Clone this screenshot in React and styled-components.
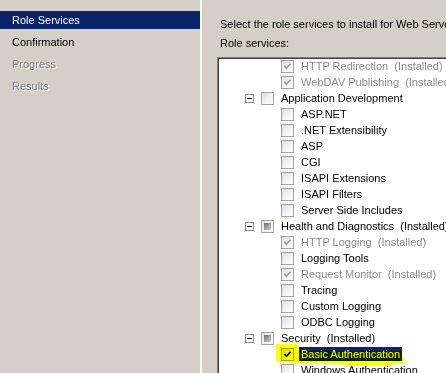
import React from "react";
import styled, { createGlobalStyle, css } from "styled-components";

const Global = createGlobalStyle`
  html, body {
    margin: 0;
    padding: 0;
    background: #d4d0c8;
    overflow: hidden;
  }
  body {
    font-family: "Liberation Sans", Arial, sans-serif;
    font-size: 11px;
    color: #000;
  }
`;

const Page = styled.div`
  display: flex;
  height: 373px;
  overflow: hidden;
`;

const Sidebar = styled.div`
  width: 200px;
  flex-shrink: 0;
  border-right: 2px solid #ffffff;
  padding-top: 11px;
  display: flex;
  flex-direction: column;
  gap: 4px;
`;

const NavItem = styled.div`
  height: 18px;
  line-height: 18px;
  padding-left: 12px;
  ${(p) =>
    p.$active &&
    css`
      background: #0a246a;
      color: #ffffff;
    `}
  ${(p) =>
    p.$disabled &&
    css`
      color: #808080;
      text-shadow: 1px 1px 0 #ffffff;
    `}
`;

const Main = styled.div`
  flex: 1;
  min-width: 0;
  overflow: hidden;
  padding: 16px 0 0 15px;
`;

const Label = styled.div`
  height: 16px;
  line-height: 16px;
  padding-left: 3px;
  white-space: nowrap;
  margin-bottom: ${(p) => p.$gap || 0}px;
`;

const TreeBox = styled.div`
  width: 270px;
  height: 340px;
  background: #ffffff;
  border-top: 1px solid #808080;
  border-left: 1px solid #808080;
  box-shadow: inset 1px 1px 0 #404040;
  padding: 0 0 0 2px;
  overflow: hidden;
`;

const List = styled.div`
  display: flex;
  flex-direction: column;
`;

const Row = styled.div`
  position: relative;
  display: flex;
  align-items: center;
  height: 16px;
  padding-left: ${(p) => 25 + 20 * (p.$level - 1)}px;
  white-space: pre;
  color: ${(p) => (p.$muted ? "#8d8d8d" : "#000")};
`;

const ExpanderSlot = styled.div`
  width: 16px;
  flex-shrink: 0;
  display: flex;
  align-items: center;
`;

const Expander = styled.div`
  width: 7px;
  height: 7px;
  border: 1px solid #8c8c8c;
  background: #ffffff;
  display: flex;
  align-items: center;
  justify-content: center;
  &::after {
    content: "";
    width: 5px;
    height: 1px;
    background: #000;
  }
`;

const Box = styled.div`
  width: 11px;
  height: 11px;
  flex-shrink: 0;
  border: 1px solid #a4a4a4;
  background: linear-gradient(135deg, #dcdae2 0%, #f4f3f7 55%, #ffffff 100%);
  display: flex;
  align-items: center;
  justify-content: center;
  margin-right: 5px;
`;

const Partial = styled.div`
  width: 7px;
  height: 7px;
  background: linear-gradient(135deg, #6e6e6e 0%, #a8a8a8 60%, #d0d0d0 100%);
`;

const Text = styled.span`
  padding: 0 2px;
  line-height: 14px;
  ${(p) =>
    p.$selected &&
    css`
      background: #0a246a;
      color: #ffffff;
    `}
`;

const Marker = styled.span`
  position: absolute;
  left: 56px;
  top: -2px;
  width: 128px;
  height: 22px;
  background: #ffff00;
  mix-blend-mode: multiply;
  clip-path: polygon(0 0, 17% 0, 17% 30%, 98% 32%, 100% 88%, 78% 100%, 0 82%);
  pointer-events: none;
`;

const Check = ({ color }) => (
  <svg width="9" height="9" viewBox="0 0 9 9">
    <path d="M1.5 4.2 L3.5 6.3 L7.6 1.8" fill="none" stroke={color} strokeWidth="1.7" />
  </svg>
);

const items = [
  { level: 2, state: "installed", text: "HTTP Redirection  (Installed)" },
  { level: 2, state: "installed", text: "WebDAV Publishing  (Installed)" },
  { level: 1, state: "off", text: "Application Development", parent: true },
  { level: 2, state: "off", text: "ASP.NET" },
  { level: 2, state: "off", text: ".NET Extensibility" },
  { level: 2, state: "off", text: "ASP" },
  { level: 2, state: "off", text: "CGI" },
  { level: 2, state: "off", text: "ISAPI Extensions" },
  { level: 2, state: "off", text: "ISAPI Filters" },
  { level: 2, state: "off", text: "Server Side Includes" },
  { level: 1, state: "partial", text: "Health and Diagnostics  (Installed)", parent: true },
  { level: 2, state: "installed", text: "HTTP Logging  (Installed)" },
  { level: 2, state: "off", text: "Logging Tools" },
  { level: 2, state: "installed", text: "Request Monitor  (Installed)" },
  { level: 2, state: "off", text: "Tracing" },
  { level: 2, state: "off", text: "Custom Logging" },
  { level: 2, state: "off", text: "ODBC Logging" },
  { level: 1, state: "partial", text: "Security  (Installed)", parent: true },
  { level: 2, state: "on", text: "Basic Authentication", selected: true },
  { level: 2, state: "off", text: "Windows Authentication" },
];

const TreeRow = ({ item }) => (
  <Row $level={item.level} $muted={item.state === "installed"}>
    <ExpanderSlot>{item.parent && <Expander />}</ExpanderSlot>
    <Box>
      {item.state === "installed" && <Check color="#a0a0a0" />}
      {item.state === "on" && <Check color="#000" />}
      {item.state === "partial" && <Partial />}
    </Box>
    <Text $selected={item.selected}>{item.text}</Text>
    {item.selected && <Marker />}
  </Row>
);

export default function App() {
  return (
    <>
      <Global />
      <Page>
        <Sidebar>
          <NavItem $active>Role Services</NavItem>
          <NavItem>Confirmation</NavItem>
          <NavItem $disabled>Progress</NavItem>
          <NavItem $disabled>Results</NavItem>
        </Sidebar>
        <Main>
          <Label $gap={3}>Select the role services to install for Web Server (IIS):</Label>
          <Label $gap={6}>Role services:</Label>
          <TreeBox>
            <List>
              {items.map((item, i) => (
                <TreeRow key={i} item={item} />
              ))}
            </List>
          </TreeBox>
        </Main>
      </Page>
    </>
  );
}
